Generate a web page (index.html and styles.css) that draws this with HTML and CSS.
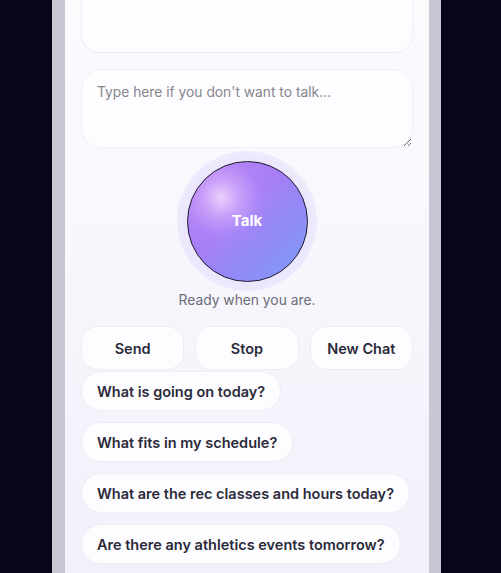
FILE: index.html
```html
<!DOCTYPE html>
<html lang="en">
<head>
<meta charset="utf-8">
<title>Talk</title>
<link rel="stylesheet" href="styles.css">
</head>
<body>
<div class="frame">
  <div class="panel">
    <div class="transcript"></div>
    <textarea class="typebox" placeholder="Type here if you don't want to talk..."></textarea>
    <div class="talk-wrap">
      <div class="glow">
        <button class="talk">Talk</button>
      </div>
    </div>
    <p class="status">Ready when you are.</p>
    <div class="actions">
      <button class="action">Send</button>
      <button class="action">Stop</button>
      <button class="action">New Chat</button>
    </div>
    <div class="chips">
      <button class="chip">What is going on today?</button>
      <button class="chip">What fits in my schedule?</button>
      <button class="chip">What are the rec classes and hours today?</button>
      <button class="chip">Are there any athletics events tomorrow?</button>
    </div>
  </div>
</div>
</body>
</html>
```
FILE: styles.css
```css
html, body {
  margin: 0;
  padding: 0;
  height: 100%;
  overflow: hidden;
}
body {
  background: #08051a;
  font-family: "Inter", "Liberation Sans", sans-serif;
}
.frame {
  margin-left: 52px;
  width: 364px;
  height: 573px;
  border-left: 13px solid #c9c6d3;
  border-right: 12px solid #c9c6d3;
  background: linear-gradient(180deg, #fbfbfe 0%, #f6f5fc 60%, #f2f1fb 100%);
  overflow: hidden;
}
.panel {
  display: flex;
  flex-direction: column;
  padding: 0 16px;
}
.transcript {
  height: 53px;
  background: #fdfdff;
  border: 1px solid #efeef6;
  border-top: none;
  border-radius: 0 0 18px 18px;
  box-sizing: border-box;
}
.typebox {
  margin-top: 16px;
  height: 79px;
  box-sizing: border-box;
  border: 1px solid #f0eff6;
  border-radius: 20px;
  background: #fdfdff;
  padding: 12px 15px;
  font-family: inherit;
  font-size: 13.8px;
  line-height: 20px;
  color: #2b2a3a;
  resize: vertical;
  outline: none;
}
.typebox::placeholder {
  color: #86868e;
}
.talk-wrap {
  display: flex;
  justify-content: center;
  margin-top: 3px;
}
.glow {
  width: 140px;
  height: 140px;
  border-radius: 50%;
  background: radial-gradient(circle, rgba(205, 192, 250, 0.45) 0%, rgba(212, 200, 251, 0.38) 60%, rgba(225, 216, 252, 0.25) 80%, rgba(240, 236, 253, 0) 100%);
  display: flex;
  align-items: center;
  justify-content: center;
}
.talk {
  width: 121px;
  height: 121px;
  border-radius: 50%;
  border: 1.5px solid #1e1b2e;
  background:
    radial-gradient(circle at 28% 30%, rgba(250, 228, 255, 0.8) 0%, rgba(228, 190, 252, 0.5) 16%, rgba(195, 150, 250, 0.18) 32%, rgba(190, 140, 250, 0) 48%),
    linear-gradient(135deg, #b27cf6 0%, #a77df6 40%, #8f8bf7 70%, #7d9ef8 100%);
  color: #ffffff;
  font-family: inherit;
  font-weight: 700;
  font-size: 15px;
  padding: 0 0 2px;
  cursor: pointer;
}
.status {
  margin: -1px 0 0;
  text-align: center;
  font-size: 13.8px;
  color: #6d6c78;
  line-height: 20px;
}
.actions {
  margin-top: 16px;
  display: grid;
  grid-template-columns: 1fr 1fr 1fr;
  gap: 11px;
}
.action {
  height: 44px;
  border-radius: 17px;
  border: 1px solid #eeedf5;
  background: #fdfdff;
  font-family: inherit;
  font-weight: 600;
  font-size: 14.5px;
  color: #2b2a3a;
  padding: 0;
}
.chips {
  margin-top: 1px;
  display: flex;
  flex-direction: column;
  align-items: flex-start;
  gap: 11px;
}
.chip {
  height: 40px;
  border-radius: 20px;
  border: 1px solid #eeedf5;
  background: #fdfdff;
  padding: 0 15px;
  font-family: inherit;
  font-weight: 600;
  font-size: 14.5px;
  color: #2b2a3a;
}
```
